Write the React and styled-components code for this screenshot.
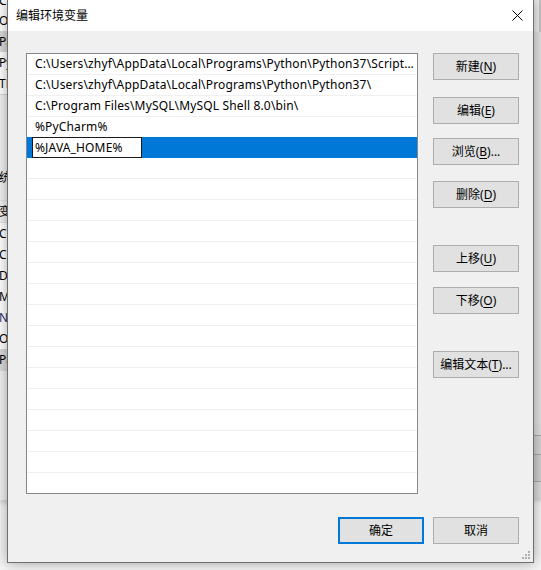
import React from 'react';
import styled, { createGlobalStyle } from 'styled-components';

const GlobalStyle = createGlobalStyle`
    html, body {
        margin: 0;
        padding: 0;
        background: #f4f4f4;
    }
    body {
        font-family: 'Noto Sans', 'Noto Sans CJK SC', sans-serif;
        font-size: 12px;
        color: #000;
    }
`;

const UI_FONT = `'Noto Sans', 'Noto Sans CJK SC', sans-serif`;

const Desktop = styled.div`
    position: relative;
    width: 541px;
    height: 570px;
    overflow: hidden;
    background: #f4f4f4;
    font-family: ${UI_FONT};
`;

/* windows lying behind the dialog */
const BackWindowLeft = styled.div`
    position: absolute;
    left: -1px;
    top: 0;
    width: 60px;
    height: 500px;
    background: #f0f0f0;
    display: flex;
    flex-direction: column;
    box-shadow: 0 2px 6px rgba(0, 0, 0, 0.2);
`;

const BackList = styled.div`
    background: #fff;
    display: flex;
    flex-direction: column;
    margin-top: ${(p) => p.$top || 0}px;
    border-bottom: 1px solid #d8d8d8;
`;

const BackRow = styled.div`
    height: ${(p) => p.$h || 21}px;
    line-height: ${(p) => p.$h || 21}px;
    font-size: 12px;
    white-space: nowrap;
    background: ${(p) => (p.$sel ? '#d9d9d9' : p.$head ? '#f0f0f0' : '#fff')};
    border-bottom: ${(p) => (p.$head ? '1px solid #e5e5e5' : 'none')};
    color: ${(p) => p.$color || '#000'};
`;

const BackWindowRight = styled.div`
    position: absolute;
    left: 530px;
    top: 0;
    width: 40px;
    height: 498px;
    background: #e8e8e8;
    display: flex;
    flex-direction: column;
    box-shadow: 0 2px 6px rgba(0, 0, 0, 0.2);
`;

const RightBand = styled.div`
    height: ${(p) => p.$h}px;
    background: ${(p) => p.$bg || '#e8e8e8'};
    border-bottom: ${(p) => (p.$line ? '1px solid #a8a8a8' : 'none')};
    border-left: 5px solid transparent;
    box-sizing: border-box;
    display: flex;
    justify-content: flex-end;
`;

const RightScroll = styled.div`
    width: 3px;
    margin-right: 28px;
    background: #c4c4c4;
`;

/* the dialog */
const Dialog = styled.div`
    position: absolute;
    left: 7px;
    top: -1px;
    width: 527px;
    height: 564px;
    box-sizing: border-box;
    border: 1px solid #6f6f6f;
    background: #f0f0f0;
    display: flex;
    flex-direction: column;
    box-shadow: 0 0 12px rgba(0, 0, 0, 0.35);
`;

const TitleBar = styled.div`
    height: 31px;
    flex: none;
    background: #fff;
    display: flex;
    align-items: center;
    justify-content: space-between;
    padding: 0 10px 0 8px;
`;

const Title = styled.div`
    font-size: 12px;
    color: #000;
    padding-bottom: 1px;
`;

const CloseButton = styled.div`
    width: 12px;
    height: 12px;
    display: flex;
    align-items: center;
    justify-content: center;
    margin-bottom: 1px;
`;

const Body = styled.div`
    flex: 1;
    display: flex;
    flex-direction: column;
    padding: 22px 14px 0 18px;
    position: relative;
`;

const Main = styled.div`
    display: flex;
    gap: 15px;
`;

const ListBox = styled.div`
    width: 392px;
    height: 441px;
    box-sizing: border-box;
    border: 1px solid #828790;
    background: #fff;
    overflow: hidden;
    display: flex;
    flex-direction: column;
`;

const Row = styled.div`
    height: 21px;
    flex: none;
    box-sizing: border-box;
    border-bottom: 1px solid ${(p) => (p.$selected ? '#0078d7' : '#f0f0f0')};
    background: ${(p) => (p.$selected ? '#0078d7' : '#fff')};
    display: flex;
    align-items: stretch;
    padding: ${(p) => (p.$selected ? '0 0 0 5px' : '0 3px 0 8px')};
    margin-top: ${(p) => (p.$selected ? '-1px' : '0')};
`;

const RowText = styled.div`
    flex: 1;
    min-width: 0;
    line-height: 20px;
    white-space: nowrap;
    overflow: hidden;
    text-overflow: ellipsis;
    font-size: 12px;
    letter-spacing: 0.15px;
`;

const EditBox = styled.div`
    width: 110px;
    box-sizing: border-box;
    border: 1px solid #1a1a1a;
    background: #fff;
    padding-left: 2px;
    line-height: 19px;
    font-size: 12px;
    letter-spacing: 0.15px;
    white-space: nowrap;
    height: 21px;
`;

const ButtonColumn = styled.div`
    display: flex;
    flex-direction: column;
`;

const Button = styled.div`
    width: 86px;
    height: 27px;
    box-sizing: border-box;
    border: ${(p) => (p.$primary ? '2px solid #0078d7' : '1px solid #adadad')};
    background: #e1e1e1;
    display: flex;
    align-items: center;
    justify-content: center;
    font-size: 12px;
    color: #000;
    margin-top: ${(p) => p.$mt || 0}px;
    padding-bottom: 1px;

    u {
        text-decoration: underline;
        text-underline-offset: 2px;
    }
`;

const Footer = styled.div`
    display: flex;
    justify-content: flex-end;
    gap: 9px;
    padding-top: 23px;
`;

const Grip = styled.div`
    position: absolute;
    right: 3px;
    bottom: 3px;
    width: 8px;
    height: 8px;
    display: flex;
`;

const entries = [
    'C:\\Users\\zhyf\\AppData\\Local\\Programs\\Python\\Python37\\Scripts\\',
    'C:\\Users\\zhyf\\AppData\\Local\\Programs\\Python\\Python37\\',
    'C:\\Program Files\\MySQL\\MySQL Shell 8.0\\bin\\',
    '%PyCharm%'
];

const sideButtons = [
    { label: '新建', key: 'N', mt: 0 },
    { label: '编辑', key: 'E', mt: 17 },
    { label: '浏览', key: 'B', mt: 14, dots: true },
    { label: '删除', key: 'D', mt: 16 },
    { label: '上移', key: 'U', mt: 37 },
    { label: '下移', key: 'O', mt: 15 },
    { label: '编辑文本', key: 'T', mt: 37, dots: true }
];

const leftRows = [
    { t: 'C' },
    { t: 'O' },
    { t: 'Pa', sel: true },
    { t: 'Py' },
    { t: 'TE' }
];

const leftRows2 = [
    { t: '统', head: true, h: 44 },
    { t: '变', head: true },
    { t: 'C' },
    { t: 'C' },
    { t: 'D' },
    { t: 'M' },
    { t: 'N', color: '#1c2f6e' },
    { t: 'O' },
    { t: 'Pa', sel: true }
];

const App = () => {
    const filler = Array.from({ length: 17 });

    return (
        <Desktop>
            <GlobalStyle />
            <BackWindowLeft>
                <BackList $top={-9}>
                    {leftRows.map((r, i) => (
                        <BackRow key={i} $sel={r.sel} $h={i === 0 ? 19 : 21}>
                            {r.t}
                        </BackRow>
                    ))}
                </BackList>
                <BackList $top={61}>
                    {leftRows2.map((r, i) => (
                        <BackRow
                            key={i}
                            $sel={r.sel}
                            $head={r.head}
                            $h={r.h}
                            $color={r.color}
                        >
                            {r.t}
                        </BackRow>
                    ))}
                </BackList>
            </BackWindowLeft>

            <BackWindowRight>
                <RightBand $h={32} $bg="#ececec">
                    <RightScroll />
                </RightBand>
                <RightBand $h={392} $bg="#e2e2e2" />
                <RightBand $h={12} $bg="#dedede" $line />
                <RightBand $h={19} $bg="#d4d4d4" $line />
                <RightBand $h={27} $bg="#cfcfcf" $line />
                <RightBand $h={16} $bg="#dadada" />
            </BackWindowRight>

            <Dialog>
                <TitleBar>
                    <Title>编辑环境变量</Title>
                    <CloseButton>
                        <svg width="11" height="11" viewBox="0 0 11 11">
                            <path
                                d="M0.5 0.5 L10.5 10.5 M10.5 0.5 L0.5 10.5"
                                stroke="#000"
                                strokeWidth="1"
                                fill="none"
                            />
                        </svg>
                    </CloseButton>
                </TitleBar>
                <Body>
                    <Main>
                        <ListBox>
                            {entries.map((e) => (
                                <Row key={e}>
                                    <RowText>{e}</RowText>
                                </Row>
                            ))}
                            <Row $selected>
                                <EditBox>%JAVA_HOME%</EditBox>
                            </Row>
                            {filler.map((_, i) => (
                                <Row key={`f${i}`}>
                                    <RowText />
                                </Row>
                            ))}
                        </ListBox>
                        <ButtonColumn>
                            {sideButtons.map((b) => (
                                <Button key={b.key} $mt={b.mt}>
                                    {b.label}(<u>{b.key}</u>){b.dots ? '...' : ''}
                                </Button>
                            ))}
                        </ButtonColumn>
                    </Main>
                    <Footer>
                        <Button $primary>确定</Button>
                        <Button>取消</Button>
                    </Footer>
                    <Grip>
                        <svg width="8" height="8" viewBox="0 0 8 8">
                            <g fill="#b0b0b0">
                                <rect x="6" y="0" width="2" height="2" />
                                <rect x="3" y="3" width="2" height="2" />
                                <rect x="6" y="3" width="2" height="2" />
                                <rect x="0" y="6" width="2" height="2" />
                                <rect x="3" y="6" width="2" height="2" />
                                <rect x="6" y="6" width="2" height="2" />
                            </g>
                        </svg>
                    </Grip>
                </Body>
            </Dialog>
        </Desktop>
    );
};

export default App;
